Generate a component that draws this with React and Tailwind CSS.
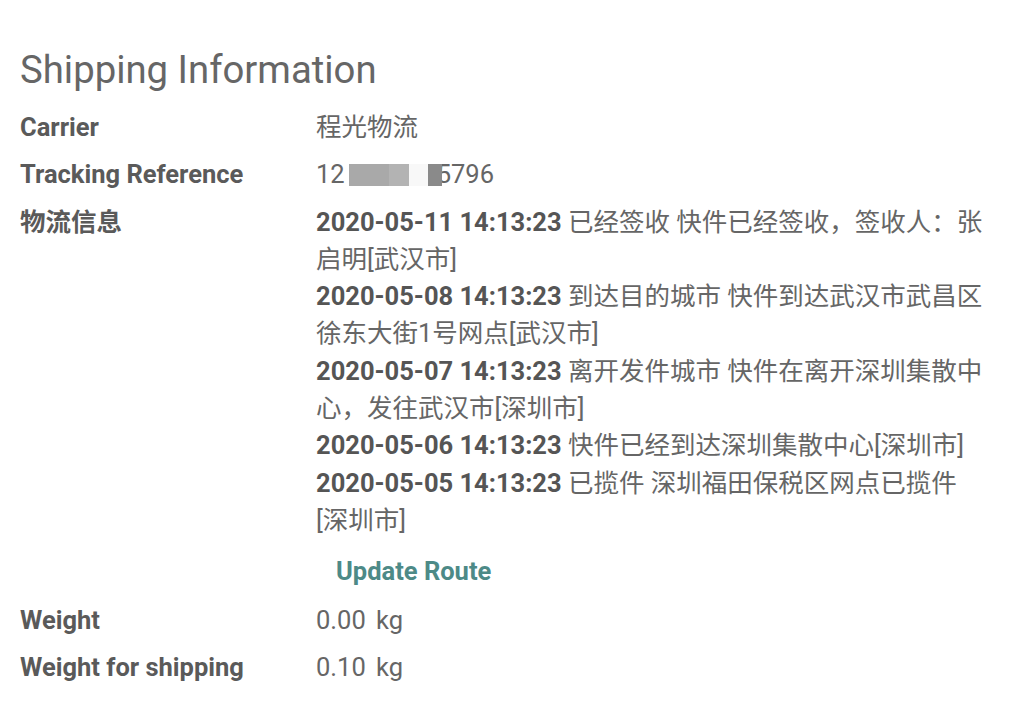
const font = { fontFamily: 'Roboto, "Noto Sans CJK SC", sans-serif' }

const tracking = [
  ['2020-05-11 14:13:23', '已经签收 快件已经签收，签收人：张启明[武汉市]'],
  ['2020-05-08 14:13:23', '到达目的城市 快件到达武汉市武昌区徐东大街1号网点[武汉市]'],
  ['2020-05-07 14:13:23', '离开发件城市 快件在离开深圳集散中心，发往武汉市[深圳市]'],
  ['2020-05-06 14:13:23', '快件已经到达深圳集散中心[深圳市]'],
  ['2020-05-05 14:13:23', '已揽件 深圳福田保税区网点已揽件[深圳市]'],
]

function Row({ label, children }) {
  return (
    <div className="grid grid-cols-[296px_1fr] py-[5px]">
      <div className="font-bold text-[#5a5a5a]">{label}</div>
      <div className="text-[#666]">{children}</div>
    </div>
  )
}

export default function App() {
  return (
    <div className="min-h-screen bg-white pl-5 pr-5 pt-[45px] text-[25.5px] leading-[37.3px]" style={font}>
      <h2 className="text-[38.3px] leading-[50px] text-[#666] mb-[9px]">Shipping Information</h2>

      <Row label="Carrier">程光物流</Row>
      <Row label="Tracking Reference">
        <span className="inline-flex items-center">
          12
          <span className="inline-block w-[40px] h-[22px] ml-[4px] bg-[#a9a9a9]" />
          <span className="inline-block w-[20px] h-[22px] bg-[#b3b3b3]" />
          <span className="inline-block w-[19px] h-[22px] bg-[#f8f8f8]" />
          <span className="relative z-10 inline-block w-[14px] h-[22px] bg-[#8a8a8a]" />
          <span className="-ml-[5px]">5796</span>
        </span>
      </Row>
      <Row label="物流信息">
        <div className="w-[672px]">
          {tracking.map(([time, text]) => (
            <div key={time}>
              <span className="font-bold text-[#555]">{time}</span> {text}
            </div>
          ))}
        </div>
        <button className="mt-[14px] mb-[1px] px-5 font-bold text-[#4d8a87]">Update Route</button>
      </Row>
      <Row label="Weight">0.00 <span className="ml-[4px]">kg</span></Row>
      <Row label="Weight for shipping">0.10 <span className="ml-[4px]">kg</span></Row>
    </div>
  )
}
